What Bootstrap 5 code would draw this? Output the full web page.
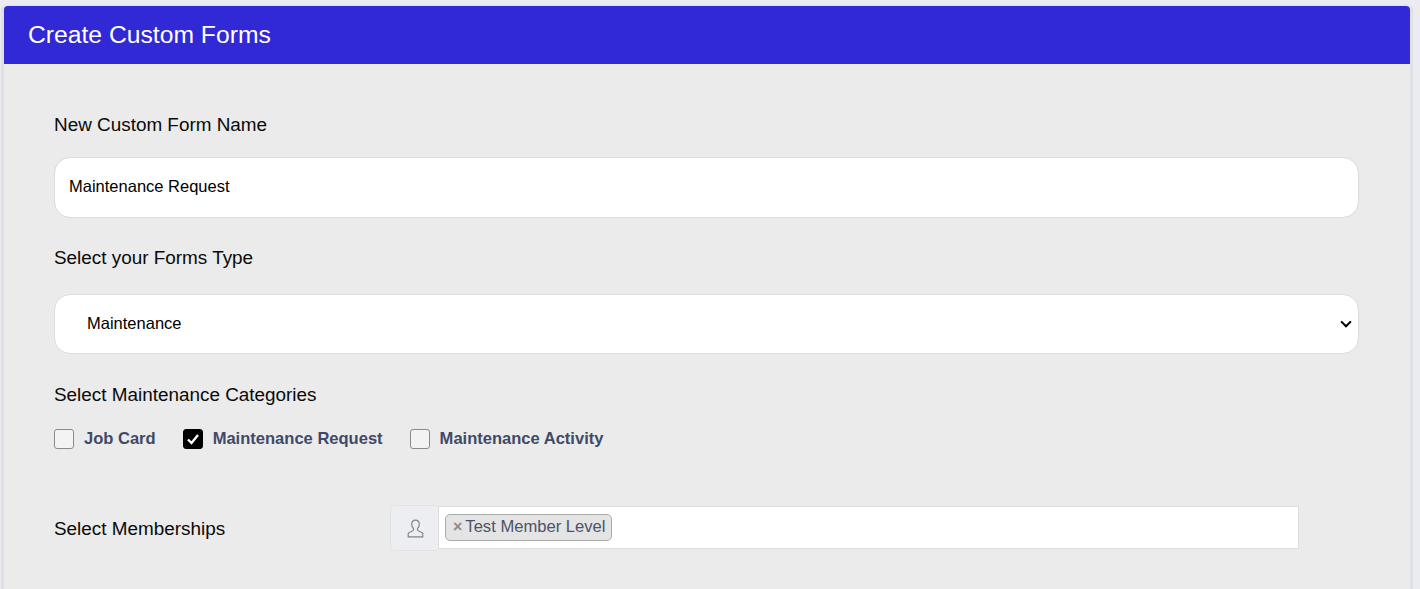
<!doctype html>
<html lang="en"><head><meta charset="utf-8"><title>Create Custom Forms</title>
<link href="https://cdn.jsdelivr.net/npm/bootstrap@5.3.0/dist/css/bootstrap.min.css" rel="stylesheet">
<style>
html,body{height:589px;overflow:hidden}
body{background:#ebecef;font-family:"Liberation Sans",Arial,sans-serif;color:#000;padding:6px 10px 0 4px}
.form-shell{background:#ebebeb;border:0;border-radius:4px 4px 0 0;box-shadow:3px 0 0 #e0e1e4,-3px 0 0 #e0e1e4,0 -1px 2px #dfe0e3;height:600px}
.shell-head{background:#3129d5;color:#fff;height:58px;padding:0 24px;font-size:24.7px;line-height:57px;border-radius:4px 4px 0 0}
.shell-body{padding:49px 51px 0 50px}
.field-title{font-size:18.9px;line-height:24px;margin:0;color:#0a0a0a}
.title-second{margin-top:28px}
.title-third{margin-top:29px}
.name-input.form-control,.type-select.form-select{font-size:16.5px;color:#000;background-color:#fff;border:1px solid #dcdcdc;border-radius:16px;font-family:inherit}
.name-input.form-control{height:61px;margin-top:20px;padding:0 14px 2px}
.type-select.form-select{height:60px;margin-top:24px;padding:0 32px 2px;background-position:right 4px center;background-size:16px 12px;background-image:url("data:image/svg+xml,%3csvg xmlns='http://www.w3.org/2000/svg' viewBox='0 0 16 16'%3e%3cpath fill='none' stroke='%23000' stroke-width='2.8' d='m1.500 4.500 6.500 6.500 6.500-6.500'/%3e%3c/svg%3e")}
.cat-row{gap:27px;margin-top:21px;height:22px}
.cat-item{gap:10px;font-size:16.55px;font-weight:700;color:#3f4a68}
.cat-box.form-check-input{width:20px;height:20px;margin:0;border:1px solid #8b8b8b;border-radius:3px;background-color:#f3f3f3;flex:none}
.cat-box.form-check-input:checked{background-color:#000;border-color:#000;background-size:16px 16px;background-image:url("data:image/svg+xml,%3csvg xmlns='http://www.w3.org/2000/svg' viewBox='0 0 16 16'%3e%3cpath fill='none' stroke='%23fff' stroke-width='2.400' d='m3 8.500 3.500 3.500 6.500-8'/%3e%3c/svg%3e")}
.member-row{margin-top:55px}
.member-label{width:336px;font-size:18.9px;line-height:22px;color:#0a0a0a;padding-top:1px}
.member-group{width:909px;height:46px}
.member-icon{width:48px;height:46px;background:#eceef1;border:1px solid #e0e2e6;border-right:0;border-radius:5px 0 0 5px;color:#7c8493;padding-left:1px}
.member-tags{background:#fff;border:1px solid #dedede;height:43px;flex:1;margin-top:1px;padding:7px 6px}
.member-tag{height:27px;background:#e4e4e4;border:1px solid #aaa;border-radius:5px;color:#4b5368;font-size:16.6px;line-height:24px;padding:0 5px 0 7px}
.tag-x{color:#8c8c8c;font-weight:700;font-size:16px;margin-right:3px}
</style></head><body>
<div class="card form-shell">
<div class="shell-head">Create Custom Forms</div>
<div class="shell-body">
<label class="field-title d-block" for="fname">New Custom Form Name</label>
<input id="fname" class="form-control name-input" type="text" value="Maintenance Request">
<label class="field-title d-block title-second" for="ftype">Select your Forms Type</label>
<select id="ftype" class="form-select type-select"><option>Maintenance</option></select>
<p class="field-title title-third">Select Maintenance Categories</p>
<div class="d-flex cat-row">
<label class="d-flex align-items-center cat-item"><input type="checkbox" class="form-check-input cat-box">Job Card</label>
<label class="d-flex align-items-center cat-item"><input type="checkbox" class="form-check-input cat-box" checked>Maintenance Request</label>
<label class="d-flex align-items-center cat-item"><input type="checkbox" class="form-check-input cat-box">Maintenance Activity</label>
</div>
<div class="d-flex align-items-center member-row">
<div class="member-label">Select Memberships</div>
<div class="d-flex member-group">
<div class="d-flex align-items-center justify-content-center member-icon">
<svg width="17" height="19" viewBox="0 0 16 18" fill="none" stroke="currentColor" stroke-width="1.1"><path d="M8 1c-2.300 0-3.600 1.700-3.600 3.900 0 1.800.7 3.200 1.700 4.200v1.500c-.2 1-4.600 1.500-5 3.100V17h13.800v-3.300c-.4-1.600-4.800-2.100-5-3.100V9.100c1-1 1.700-2.400 1.700-4.200C11.600 2.700 10.300 1 8 1z"/></svg>
</div>
<div class="member-tags"><span class="d-inline-block member-tag"><span class="tag-x">×</span>Test Member Level</span></div>
</div>
</div>
</div>
</div>
<script src="https://cdn.jsdelivr.net/npm/bootstrap@5.3.0/dist/js/bootstrap.bundle.min.js"></script>
</body></html>
